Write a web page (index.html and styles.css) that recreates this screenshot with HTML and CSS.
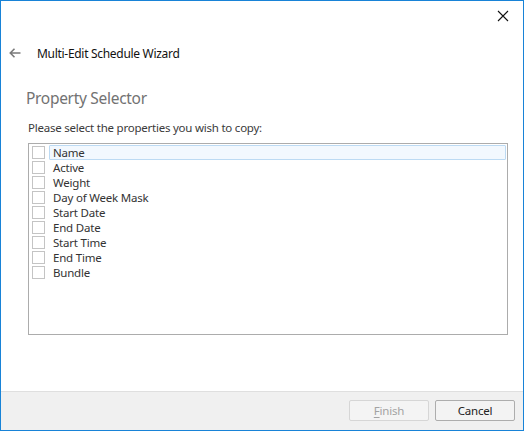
FILE: index.html
```html
<!DOCTYPE html>
<html>
<head>
<meta charset="utf-8">
<link rel="stylesheet" href="styles.css">
</head>
<body>
<div class="window">
  <div class="titlebar">
    <div class="close">
      <svg width="12" height="12" viewBox="0 0 12 12"><path d="M1 1 L11 11 M11 1 L1 11" stroke="#111" stroke-width="1.1" fill="none"/></svg>
    </div>
  </div>
  <div class="nav">
    <svg class="back" width="12" height="10" viewBox="0 0 12 10"><path d="M5.5 0.8 L1.3 5 L5.5 9.2 M1.3 5 H11.5" stroke="#7a7a7a" stroke-width="1.6" fill="none"/></svg>
    <span class="nav-title">Multi-Edit Schedule Wizard</span>
  </div>
  <div class="content">
    <h1 class="heading">Property Selector</h1>
    <p class="prompt">Please select the properties you wish to copy:</p>
    <div class="listbox">
      <div class="row selected"><span class="check"></span><span class="label">Name</span></div>
      <div class="row"><span class="check"></span><span class="label">Active</span></div>
      <div class="row"><span class="check"></span><span class="label">Weight</span></div>
      <div class="row"><span class="check"></span><span class="label">Day of Week Mask</span></div>
      <div class="row"><span class="check"></span><span class="label">Start Date</span></div>
      <div class="row"><span class="check"></span><span class="label">End Date</span></div>
      <div class="row"><span class="check"></span><span class="label">Start Time</span></div>
      <div class="row"><span class="check"></span><span class="label">End Time</span></div>
      <div class="row"><span class="check"></span><span class="label">Bundle</span></div>
    </div>
  </div>
  <div class="footer">
    <button class="btn disabled"><u>F</u>inish</button>
    <button class="btn">Cancel</button>
  </div>
</div>
</body>
</html>
```
FILE: styles.css
```css
* { box-sizing: border-box; }
html, body { margin: 0; padding: 0; background: #fff; }
body { font-family: "Noto Sans", "Open Sans", sans-serif; color: #000; }
.window {
  width: 524px;
  height: 431px;
  border: 1px solid #1883d7;
  background: #fff;
  display: flex;
  flex-direction: column;
}
.titlebar {
  height: 31px;
  display: flex;
  justify-content: flex-end;
}
.close {
  width: 46px;
  height: 30px;
  display: flex;
  align-items: center;
  justify-content: center;
  padding-left: 6px;
}
.close svg { display: block; margin-top: -1px; }
.nav {
  height: 44px;
  display: flex;
  align-items: center;
  padding-left: 8px;
  padding-bottom: 2px;
}
.back { display: block; }
.nav-title {
  margin-left: 16px;
  font-size: 12px;
  letter-spacing: -0.3px;
  color: #111;
}
.content {
  padding-left: 25px;
  padding-right: 16px;
}
.heading {
  margin: 0;
  font-weight: normal;
  font-size: 15.5px;
  letter-spacing: -0.3px;
  color: #727272;
  line-height: 22px;
  height: 22px;
  margin-top: 11px;
}
.prompt {
  margin: 12px 0 0 2px;
  font-size: 11.5px;
  letter-spacing: -0.23px;
  color: #3a3a3a;
  line-height: 14px;
}
.listbox {
  margin: 8px 0 0 2px;
  width: 480px;
  height: 192px;
  border: 1px solid #acacac;
  padding-top: 1px;
  padding-left: 3px;
  padding-right: 1px;
}
.row {
  height: 15px;
  display: flex;
  align-items: center;
}
.check {
  width: 13px;
  height: 13px;
  border: 1px solid #c4c4c4;
  background: #fff;
  flex: none;
}
.label {
  flex: 1;
  margin-left: 4px;
  padding-left: 3px;
  height: 15px;
  line-height: 14px;
  font-size: 11.5px;
  letter-spacing: -0.2px;
  color: #333;
  border: 1px solid transparent;
}
.row.selected .label {
  background: #f2f8fe;
  border-color: #bcdaf3;
  border-radius: 1px;
}
.footer {
  margin-top: auto;
  height: 39px;
  background: #f0f0f0;
  border-top: 1px solid #dfdfdf;
  display: flex;
  justify-content: flex-end;
  align-items: flex-start;
  padding-top: 8px;
  padding-right: 8px;
  gap: 6px;
}
.btn {
  width: 80px;
  height: 21px;
  border: 1px solid #adadad;
  border-radius: 2px;
  background: #f3f3f3;
  font-family: "Noto Sans", "Open Sans", sans-serif;
  font-size: 11.5px;
  letter-spacing: -0.2px;
  color: #222;
  padding: 0;
  line-height: 18px;
}
.btn.disabled {
  border-color: #d6d6d6;
  color: #a3a3a3;
  background: #f4f4f4;
}
.btn u { text-decoration: underline; text-underline-offset: 2px; }
```
